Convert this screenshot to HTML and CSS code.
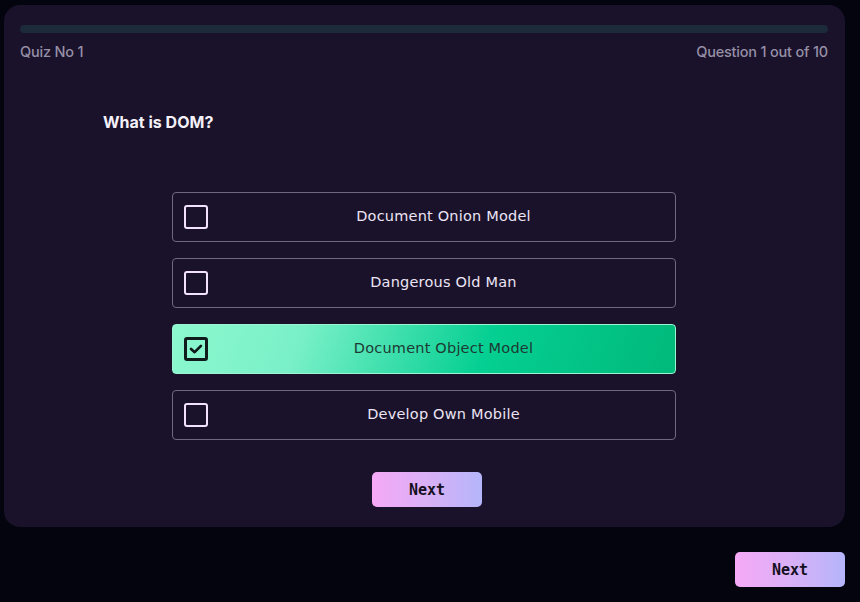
FILE: index.html
```html
<!DOCTYPE html>
<html>
<head>
<meta charset="utf-8">
<link rel="stylesheet" href="styles.css">
</head>
<body>
<div class="page">
  <div class="card">
    <div class="progress"><div class="progress-fill"></div></div>
    <div class="meta">
      <span>Quiz No 1</span>
      <span>Question 1 out of 10</span>
    </div>
    <h2 class="question">What is DOM?</h2>
    <div class="options">
      <div class="option"><span class="box"></span><span class="label">Document Onion Model</span></div>
      <div class="option"><span class="box"></span><span class="label">Dangerous Old Man</span></div>
      <div class="option selected"><span class="box"><svg viewBox="0 0 20 20" width="18" height="18"><path d="M4.5 10 L8.5 13.5 L15.5 6.5" fill="none" stroke="#0e1a1a" stroke-width="3" stroke-linecap="round" stroke-linejoin="round"/></svg></span><span class="label">Document Object Model</span></div>
      <div class="option"><span class="box"></span><span class="label">Develop Own Mobile</span></div>
    </div>
    <div class="actions"><button class="btn">Next</button></div>
  </div>
  <div class="footer"><button class="btn">Next</button></div>
</div>
</body>
</html>
```
FILE: styles.css
```css
html, body {
  margin: 0;
  padding: 0;
  background: #04040f;
  font-family: "Inter", "Noto Sans", sans-serif;
}
.page {
  width: 841px;
  padding: 5px 0 0 4px;
}
.card {
  background: #19122a;
  border-radius: 16px;
  padding: 20px 17px 20px 16px;
  height: 482px;
}
.progress {
  height: 8px;
  border-radius: 4px;
  background: #1c2a3a;
}
.meta {
  display: flex;
  justify-content: space-between;
  margin-top: 10px;
  font-size: 14.5px;
  font-weight: 500;
  color: #968fa6;
  letter-spacing: -0.2px;
}
.question {
  margin: 52px 0 0 83px;
  font-size: 16px;
  font-weight: 700;
  color: #f4f0f8;
  height: 20px;
}
.options {
  width: 504px;
  margin: 60px auto 0;
  display: flex;
  flex-direction: column;
  gap: 16px;
}
.option {
  height: 48px;
  border: 1px solid #6e6881;
  border-radius: 4px;
  display: flex;
  align-items: center;
  padding-left: 11px;
  color: #ece4f4;
  font-family: "DejaVu Sans", sans-serif;
  font-size: 14.5px;
  letter-spacing: 0.2px;
}
.option .label {
  margin-top: -2px;
}
.box {
  width: 20px;
  height: 20px;
  border: 2px solid #f3e2ff;
  border-radius: 3px;
  flex: none;
  display: flex;
  align-items: center;
  justify-content: center;
}
.label {
  flex: 1;
  text-align: center;
  padding-left: 4px;
}
.option.selected {
  border-color: #9af5d0;
  background: linear-gradient(110deg, #8cf8cf 0%, #7af0c8 25%, #05cf92 62%, #00b97a 100%);
  color: #1d3a33;
}
.option.selected .box {
  border: 3px solid #101b1c;
  width: 18px;
  height: 18px;
}
.actions {
  display: flex;
  justify-content: center;
  margin-top: 32px;
  padding-left: 6px;
}
.btn {
  width: 110px;
  height: 35px;
  border: none;
  border-radius: 5px;
  background: linear-gradient(90deg, #f6a9f6 0%, #d9b0f6 50%, #b5b5fb 100%);
  color: #141020;
  font-family: "DejaVu Sans Mono", monospace;
  font-weight: 700;
  font-size: 15px;
  cursor: pointer;
}
.footer {
  display: flex;
  justify-content: flex-end;
  margin-top: 25px;
}
```
